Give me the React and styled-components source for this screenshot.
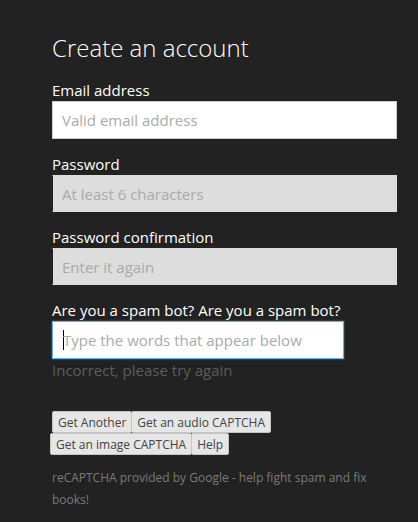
import styled, { createGlobalStyle } from "styled-components";

const GlobalStyle = createGlobalStyle`
    html, body {
        margin: 0;
        padding: 0;
        background: #222222;
    }
    body {
        font-family: "Open Sans", sans-serif;
    }
`;

function Field({label, placeholder, disabled, type = "text"}) {
    return (
        <FieldGroup>
            <Label>{label}</Label>
            <Input type={type} placeholder={placeholder} disabled={disabled}/>
        </FieldGroup>
    );
}

function App() {
    return (
        <>
            <GlobalStyle/>
            <Page>
                <Title>Create an account</Title>
                <Field label="Email address" placeholder="Valid email address"/>
                <Field label="Password" placeholder="At least 6 characters" type="password" disabled/>
                <Field label="Password confirmation" placeholder="Enter it again" type="password" disabled/>
                <FieldGroup>
                    <Label>Are you a spam bot? Are you a spam bot?</Label>
                    <CaptchaInput>
                        <Caret/>
                        <CaptchaText>Type the words that appear below</CaptchaText>
                    </CaptchaInput>
                    <ErrorText>Incorrect, please try again</ErrorText>
                </FieldGroup>
                <ButtonRows>
                    <ButtonRow>
                        <CaptchaButton>Get Another</CaptchaButton>
                        <CaptchaButton>Get an audio CAPTCHA</CaptchaButton>
                    </ButtonRow>
                    <ButtonRow $shift>
                        <CaptchaButton>Get an image CAPTCHA</CaptchaButton>
                        <CaptchaButton>Help</CaptchaButton>
                    </ButtonRow>
                </ButtonRows>
                <Credit>reCAPTCHA provided by Google - help fight spam and fix books!</Credit>
            </Page>
        </>
    );
}

const Page = styled.div`
    width: 345px;
    padding: 31px 0 0 52px;
    display: flex;
    flex-direction: column;
`;

const Title = styled.h1`
    margin: 0 0 15px;
    font-size: 24px;
    line-height: 34px;
    font-weight: 300;
    color: #ffffff;
`;

const FieldGroup = styled.div`
    display: flex;
    flex-direction: column;
    margin-bottom: 15px;
`;

const Label = styled.label`
    font-size: 15px;
    line-height: 20px;
    color: #ffffff;
    margin-bottom: 1px;
`;

const Input = styled.input`
    box-sizing: border-box;
    width: 345px;
    height: 38px;
    padding: 0 9px;
    font-family: "Open Sans", sans-serif;
    font-size: 15px;
    border: 1px solid #cccccc;
    background: #ffffff;
    color: #333;
    outline: none;

    &::placeholder {
        color: #aaaaaa;
    }

    &:disabled {
        background: #dddddd;
        border-color: #dddddd;
        border-left: 1px solid #222222;
        height: 37px;
    }
`;

const CaptchaInput = styled.div`
    box-sizing: border-box;
    width: 292px;
    height: 38px;
    padding: 0 10px;
    display: flex;
    align-items: center;
    background: #ffffff;
    border: 1px solid #66afe9;
    box-shadow: 0 0 2px rgba(102, 175, 233, 0.6);
`;

const Caret = styled.span`
    width: 1px;
    height: 20px;
    background: #000;
    margin-right: -1px;
`;

const CaptchaText = styled.span`
    font-size: 15px;
    color: #aaaaaa;
`;

const ErrorText = styled.div`
    margin-top: 0;
    font-size: 15px;
    line-height: 22px;
    color: #5c5c5c;
`;

const ButtonRows = styled.div`
    display: flex;
    flex-direction: column;
    margin-top: 15px;
`;

const ButtonRow = styled.div`
    display: flex;
    margin-left: ${p => (p.$shift ? "-2px" : "0")};
`;

const CaptchaButton = styled.button`
    box-sizing: border-box;
    height: 22px;
    padding: 0 5px;
    font-family: "Open Sans", sans-serif;
    font-size: 12px;
    color: #444444;
    background: #e6e6e6;
    border: 1px solid #c4c4c4;
    border-radius: 2px;
    margin-right: -1px;
`;

const Credit = styled.p`
    margin: 12px 0 0;
    font-size: 12px;
    line-height: 22px;
    color: #7a7a7a;
`;

export default App;
